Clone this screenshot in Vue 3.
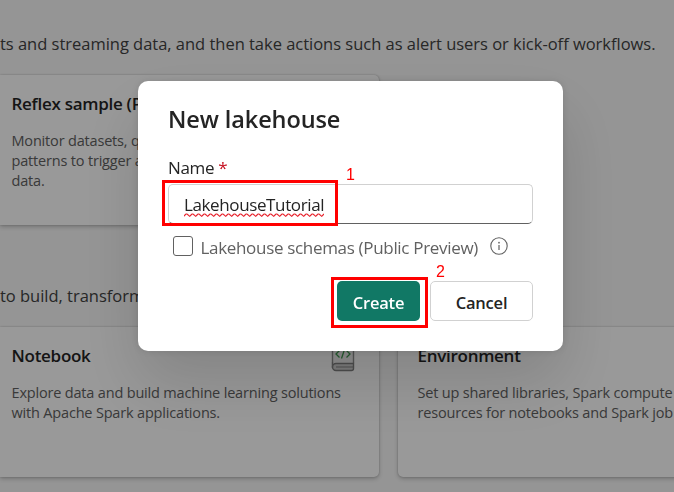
<script setup>
const dialog = {
  title: 'New lakehouse',
  name: 'LakehouseTutorial',
  option: 'Lakehouse schemas (Public Preview)'
}
</script>

<template>
  <main class="page">
    <p class="intro">ts and streaming data, and then take actions such as alert users or kick-off workflows.</p>
    <div class="row first-row">
      <article class="card">
        <h2>Reflex sample (Preview)</h2>
        <p>Monitor datasets, queries, and event<br />patterns to trigger actions on your<br />data.</p>
      </article>
    </div>
    <p class="intro second">to build, transform, and share data.</p>
    <div class="row">
      <article class="card">
        <div class="head">
          <h2>Notebook</h2>
          <svg class="book" width="24" height="32" viewBox="0 0 24 32" fill="none">
            <path d="M1.500 28V4a3 3 0 0 1 3-3h15a3 3 0 0 1 3 3v19" fill="#efefef" stroke="#8f8f8f" stroke-width="1.400" />
            <path d="M22.500 23.500H5a3.500 3.500 0 0 0 0 7h15.500a2 2 0 0 0 2-2z" fill="#d0d0d0" stroke="#808080" stroke-width="1.400" />
            <path d="M1.500 27V22M5 27h17" stroke="#858585" stroke-width="1.200" />
            <path d="M8.500 10.500 5 14l3.500 3.500M15.500 10.500 19 14l-3.500 3.500M13.500 9.500l-3 9" stroke="#3f9a50" stroke-width="1.300" />
          </svg>
        </div>
        <p>Explore data and build machine learning solutions<br />with Apache Spark applications.</p>
      </article>
      <article class="card wide">
        <h2>Environment</h2>
        <p>Set up shared libraries, Spark compute<br />resources for notebooks and Spark job</p>
      </article>
    </div>
  </main>

  <div class="overlay">
    <section class="dialog">
      <h1>{{ dialog.title }}</h1>
      <label class="label">Name <span class="star">*</span></label>
      <div class="field">
        <span class="value">{{ dialog.name }}
          <svg class="squiggle" width="140" height="4" viewBox="0 0 140 4" fill="none">
            <defs>
              <pattern id="wave" width="6" height="4" patternUnits="userSpaceOnUse">
                <path d="M-1 4 .5 2.500 2 1h1L6 3.500 7 3" stroke="#e8222c" stroke-width="1.100" fill="none" />
              </pattern>
            </defs>
            <rect width="140" height="4" fill="url(#wave)" />
          </svg>
        </span>
        <span class="mark mark-field"></span>
        <span class="num num-one">1</span>
      </div>
      <div class="option">
        <span class="box"></span>
        <span class="opt-text">{{ dialog.option }}</span>
        <svg class="info" width="18" height="18" viewBox="0 0 18 18" fill="none">
          <circle cx="9" cy="9" r="8.200" stroke="#616161" stroke-width="1.100" />
          <path d="M9 8v5" stroke="#616161" stroke-width="1.200" />
          <circle cx="9" cy="5.700" r=".85" fill="#616161" />
        </svg>
      </div>
      <div class="actions">
        <button class="create"><span>Create</span><i class="mark mark-create"></i></button>
        <button class="cancel"><span>Cancel</span><i class="num num-two">2</i></button>
      </div>
    </section>
  </div>
</template>

<style>
body {
  margin: 0;
  overflow: hidden;
}
</style>

<style scoped>
.page,
.overlay {
  width: 674px;
  height: 492px;
  box-sizing: border-box;
  overflow: hidden;
  font-family: "Open Sans", "Noto Sans", sans-serif;
}
.page {
  background: #f8f8f8;
  padding-top: 32px;
}
h1,
h2,
p {
  margin: 0;
}
.intro {
  height: 24px;
  line-height: 24px;
  font-size: 16.500px;
  letter-spacing: -.02px;
  color: #424242;
  white-space: nowrap;
  margin-bottom: 19px;
}
.second {
  margin-top: 59px;
}
.row {
  display: flex;
  gap: 19px;
}
.card {
  width: 379px;
  height: 150px;
  flex: none;
  box-sizing: border-box;
  padding: 18px 12px 0 11.500px;
  background: #fff;
  border-radius: 0 5px 5px 0;
  box-shadow: 0 0 2px rgba(0, 0, 0, .24), 0 2px 4px rgba(0, 0, 0, .2);
  white-space: nowrap;
}
.wide {
  border-radius: 5px 0 0 5px;
  padding-left: 19.500px;
}
.head {
  display: flex;
  justify-content: space-between;
  height: 22px;
  padding-right: 12px;
}
.book {
  margin-top: -5px;
}
h2 {
  height: 22px;
  line-height: 22px;
  font-size: 17px;
  font-weight: 600;
  letter-spacing: -.28px;
  color: #242424;
}
.card p {
  margin-top: 16px;
  font-size: 14.500px;
  letter-spacing: -.18px;
  line-height: 20px;
  color: #616161;
}
.overlay {
  position: fixed;
  inset: 0;
  background: rgba(0, 0, 0, .4);
  padding: 81px 111px 0 138px;
}
.dialog {
  height: 270px;
  box-sizing: border-box;
  background: #fff;
  border-radius: 10px;
  box-shadow: 0 0 8px rgba(0, 0, 0, .12), 0 32px 64px rgba(0, 0, 0, .14);
  padding: 22px 30px;
  color: #242424;
}
h1 {
  height: 32px;
  line-height: 32px;
  font-size: 23.500px;
  font-weight: 600;
  letter-spacing: -.1px;
  white-space: nowrap;
}
.label {
  display: block;
  margin-top: 21px;
  height: 24px;
  line-height: 24px;
  font-size: 17px;
  letter-spacing: -.35px;
}
.star {
  color: #c50f1f;
}
.field {
  position: relative;
  display: flex;
  align-items: center;
  margin-top: 4px;
  height: 40px;
  box-sizing: border-box;
  padding-left: 15px;
  border: 1px solid #d1d1d1;
  border-bottom-color: #616161;
  border-radius: 5px;
}
.value {
  position: relative;
  padding-top: 1px;
  font-size: 17px;
  letter-spacing: -.38px;
  line-height: 24px;
}
.squiggle {
  position: absolute;
  left: 0;
  bottom: 0;
}
.mark {
  position: absolute;
  border: 3px solid #f00;
  box-sizing: border-box;
}
.mark-field {
  left: -7px;
  top: -5px;
  width: 176px;
  height: 46px;
}
.num {
  position: absolute;
  color: #f00;
  font: normal 400 16px/18px "Liberation Sans", sans-serif;
}
.num-one {
  left: 177px;
  top: -19px;
}
.option {
  display: flex;
  align-items: center;
  margin-top: 11px;
  height: 24px;
  padding-left: 5px;
  white-space: nowrap;
}
.box {
  width: 20px;
  height: 20px;
  box-sizing: border-box;
  border: 1px solid #616161;
  border-radius: 3px;
  margin-bottom: 2px;
}
.opt-text {
  width: 290px;
  padding-left: 7.500px;
  box-sizing: border-box;
  font-size: 17px;
  letter-spacing: -.32px;
  color: #616161;
}
.info {
  margin-left: 7px;
  margin-bottom: 2px;
}
.actions {
  display: flex;
  justify-content: flex-end;
  gap: 10px;
  margin-top: 22px;
}
button {
  position: relative;
  display: flex;
  align-items: center;
  justify-content: center;
  height: 40px;
  box-sizing: border-box;
  border-radius: 5px;
  padding: 2px 0 0;
  font-family: inherit;
  font-size: 16.500px;
  font-weight: 600;
  letter-spacing: -.2px;
}
.create {
  width: 83px;
  border: 0;
  background: #117865;
  color: #fff;
}
.cancel {
  width: 103px;
  border: 1px solid #d1d1d1;
  background: #fff;
  color: #242424;
}
.mark-create {
  left: -6px;
  top: -4px;
  width: 97px;
  height: 51px;
}
.num-two {
  left: 5px;
  top: -19px;
}
</style>
